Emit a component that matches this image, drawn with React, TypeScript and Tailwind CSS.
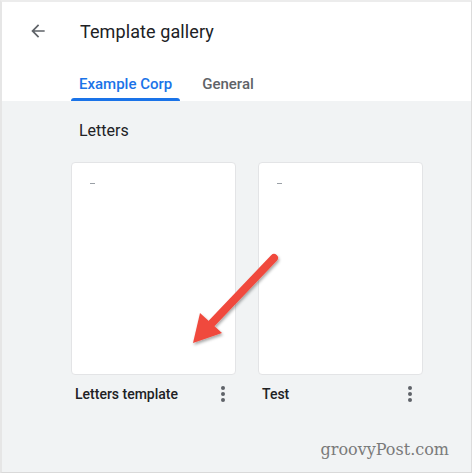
import React from 'react';

const Kebab = () => (
  <div className="flex flex-col items-center gap-[2px] w-[6px]">
    <span className="w-[4px] h-[4px] rounded-full bg-[#5f6368]" />
    <span className="w-[4px] h-[4px] rounded-full bg-[#5f6368]" />
    <span className="w-[4px] h-[4px] rounded-full bg-[#5f6368]" />
  </div>
);

const TemplateCard = ({ title }: { title: string }) => (
  <div className="flex flex-col w-[165px]">
    <div className="h-[213px] bg-white border border-[#e3e4e6] rounded-[4px] pt-[20px] pl-[18px]">
      <div className="w-[5px] h-[1px] bg-[#9aa0a6]" />
    </div>
    <div className="flex items-center justify-between pl-[4px] pr-[10px] mt-[9px]">
      <span className="text-[14px] font-medium text-[#202124] leading-[20px]">{title}</span>
      <Kebab />
    </div>
  </div>
);

export default function App() {
  return (
    <div className="w-[474px] h-[475px] bg-white" style={{ fontFamily: 'Roboto, "Liberation Sans", sans-serif' }}>
      <div className="relative w-[472px] h-[473px] border-t-2 border-t-[#ececec] border-l-2 border-l-[#e6e6e6] border-r border-r-[#dcdcdc] border-b border-b-[#d9d9d9] flex flex-col overflow-hidden">
        <header className="bg-white h-[99px] flex flex-col">
          <div className="flex items-center h-[58px] pl-[26px]">
            <svg width="20" height="20" viewBox="0 0 24 24" fill="#5f6368">
              <path d="M20 11H7.83l5.59-5.59L12 4l-8 8 8 8 1.41-1.41L7.83 13H20v-2z" />
            </svg>
            <h1 className="ml-[32px] text-[18px] text-[#202124] tracking-[0.1px]">Template gallery</h1>
          </div>
          <div className="flex items-end h-[41px] pl-[69px] gap-[14px]">
            <div className="flex flex-col items-center">
              <span className="px-[8px] text-[15px] font-medium text-[#1a73e8] leading-[20px] mb-[4px]">Example Corp</span>
              <div className="h-[3px] w-full bg-[#1a73e8] rounded-t-[3px]" />
            </div>
            <div className="flex flex-col items-center">
              <span className="px-[8px] text-[15px] font-medium text-[#5f6368] leading-[20px] mb-[7px]">General</span>
            </div>
          </div>
        </header>
        <main className="flex-1 bg-[#f1f3f4] pl-[77px] pt-[20px]">
          <h2 className="text-[16px] text-[#202124] leading-[20px] mb-[21px]">Letters</h2>
          <div className="flex gap-[22px] -ml-[8px]">
            <TemplateCard title="Letters template" />
            <TemplateCard title="Test" />
          </div>
          <div className="flex justify-end pr-[22px] mt-[34px]">
            <span className="text-[16px] text-[#7a7a7a]" style={{ fontFamily: '"DejaVu Serif", serif' }}>groovyPost.com</span>
          </div>
        </main>
        <svg className="absolute left-0 top-0 pointer-events-none" width="472" height="473" viewBox="0 0 472 473">
          <defs>
            <filter id="sh" x="-20%" y="-20%" width="140%" height="140%">
              <feDropShadow dx="1" dy="2" stdDeviation="1.5" floodColor="#000" floodOpacity="0.35" />
            </filter>
          </defs>
          <g filter="url(#sh)" transform="translate(-2,-2)">
            <line x1="274" y1="258" x2="212" y2="323" stroke="#f04a3e" strokeWidth="8" strokeLinecap="round" />
            <polygon points="193,343 200,313 222,333" fill="#f04a3e" />
          </g>
        </svg>
      </div>
    </div>
  );
}
